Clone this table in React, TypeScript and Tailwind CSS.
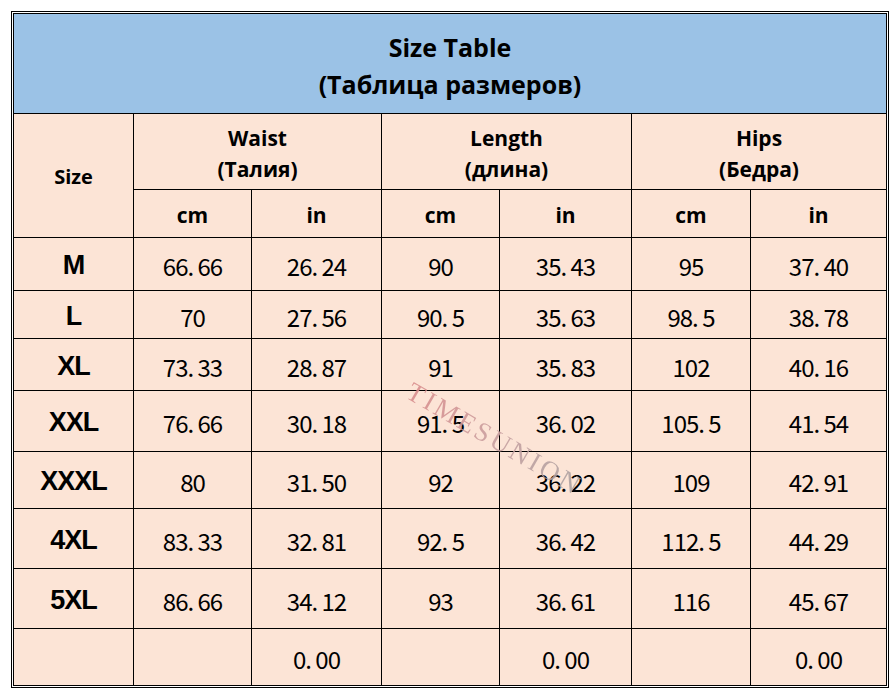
import React from "react";

const rows: [string, string[]][] = [
  ["M", ["66. 66", "26. 24", "90", "35. 43", "95", "37. 40"]],
  ["L", ["70", "27. 56", "90. 5", "35. 63", "98. 5", "38. 78"]],
  ["XL", ["73. 33", "28. 87", "91", "35. 83", "102", "40. 16"]],
  ["XXL", ["76. 66", "30. 18", "91. 5", "36. 02", "105. 5", "41. 54"]],
  ["XXXL", ["80", "31. 50", "92", "36. 22", "109", "42. 91"]],
  ["4XL", ["83. 33", "32. 81", "92. 5", "36. 42", "112. 5", "44. 29"]],
  ["5XL", ["86. 66", "34. 12", "93", "36. 61", "116", "45. 67"]],
  ["", ["", "0. 00", "", "0. 00", "", "0. 00"]],
];

const peach = "bg-[#fce4d6] flex items-center justify-center text-black";
const head = "font-['Open_Sans','Noto_Sans_CJK_SC',sans-serif]";

export default function App() {
  return (
    <div className="min-h-[696px] w-[894px] bg-white">
      <div className="ml-[11px] pt-[11px]">
        <div className="w-fit border border-black bg-white p-px">
          <div className="relative grid w-fit grid-cols-[119px_117px_129px_117px_131px_118px_135px] grid-rows-[99px_75px_47px_52px_47px_51px_60px_56px_59px_59px_56px] gap-px overflow-hidden bg-black p-px">
            <div
              className={`${head} col-span-7 flex flex-col items-center justify-center bg-[#9bc2e6] pt-[4px] text-[25px] font-bold leading-[37px] text-black`}
            >
              <div>Size Table</div>
              <div>(Таблица размеров)</div>
            </div>
            <div className={`${peach} ${head} row-span-2 pt-[3px] text-[20px] font-bold`}>Size</div>
            {[
              ["Waist", "(Талия)"],
              ["Length", "(длина)"],
              ["Hips", "(Бедра)"],
            ].map(([a, b]) => (
              <div
                key={a}
                className={`${peach} ${head} col-span-2 flex-col pt-[4px] text-[21px] font-bold leading-[31px]`}
              >
                <div>{a}</div>
                <div>{b}</div>
              </div>
            ))}
            {["cm", "in", "cm", "in", "cm", "in"].map((t, i) => (
              <div key={i} className={`${peach} ${head} pt-[4px] text-[21px] font-bold`}>
                {t}
              </div>
            ))}
            {rows.map(([s, vals], ri) => (
              <React.Fragment key={ri}>
                <div
                  className={`${peach} pt-[3px] font-['Liberation_Sans',Arial,sans-serif] text-[27px] font-bold tracking-[-1px]`}
                >
                  {s}
                </div>
                {vals.map((v, vi) => (
                  <div
                    key={vi}
                    className={`${peach} whitespace-pre pt-[4px] font-['Noto_Sans_CJK_SC',sans-serif] text-[24px] tracking-[-1px]`}
                  >
                    {v}
                  </div>
                ))}
              </React.Fragment>
            ))}
            <div className="pointer-events-none absolute left-[406px] top-[359px] origin-top-left rotate-[30deg] whitespace-nowrap bg-gradient-to-r from-[#d98c8c] via-[#c9a0a0] to-[#aaa2a2] bg-clip-text font-['Liberation_Serif','Times_New_Roman',serif] text-[27px] tracking-[3px] text-transparent opacity-90">
              TIMESUNION
            </div>
          </div>
        </div>
      </div>
    </div>
  );
}
